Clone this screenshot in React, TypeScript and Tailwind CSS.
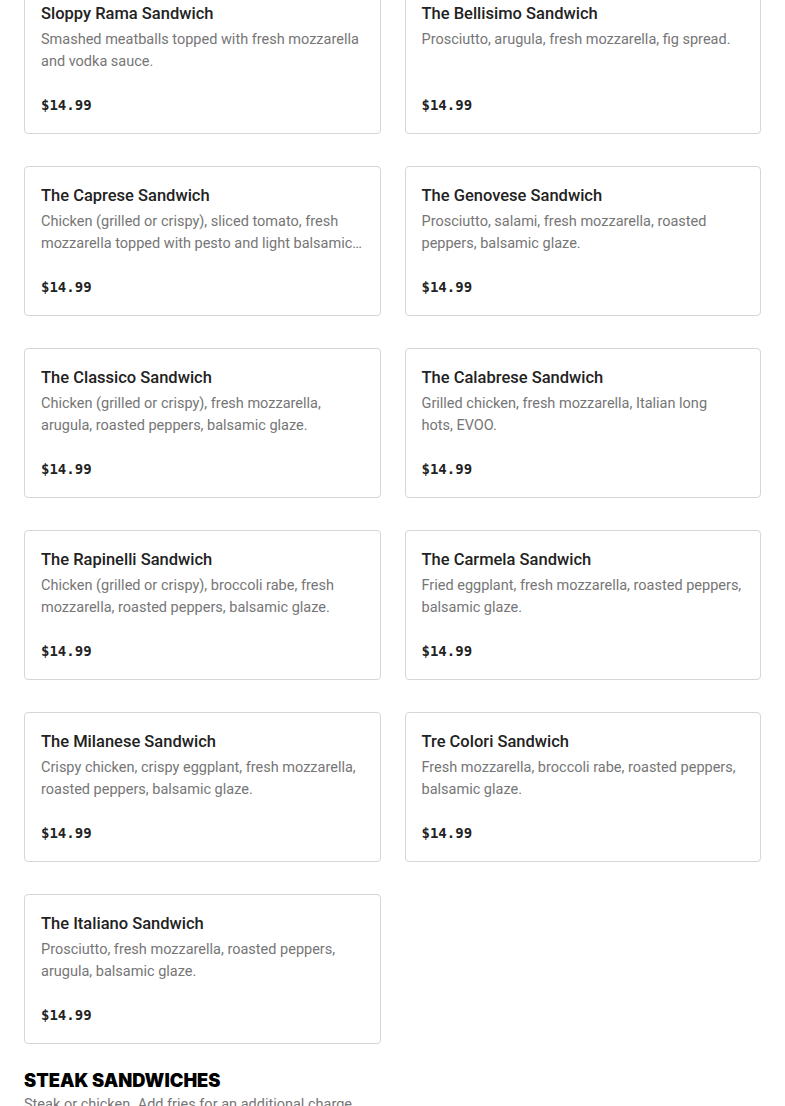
import React from "react";

const items: { name: string; desc: string }[] = [
  { name: "Sloppy Rama Sandwich", desc: "Smashed meatballs topped with fresh mozzarella and vodka sauce." },
  { name: "The Bellisimo Sandwich", desc: "Prosciutto, arugula, fresh mozzarella, fig spread." },
  { name: "The Caprese Sandwich", desc: "Chicken (grilled or crispy), sliced tomato, fresh mozzarella topped with pesto and light balsamic glaze." },
  { name: "The Genovese Sandwich", desc: "Prosciutto, salami, fresh mozzarella, roasted peppers, balsamic glaze." },
  { name: "The Classico Sandwich", desc: "Chicken (grilled or crispy), fresh mozzarella, arugula, roasted peppers, balsamic glaze." },
  { name: "The Calabrese Sandwich", desc: "Grilled chicken, fresh mozzarella, Italian long hots,\u00A0EVOO." },
  { name: "The Rapinelli Sandwich", desc: "Chicken (grilled or crispy), broccoli rabe, fresh mozzarella, roasted peppers, balsamic glaze." },
  { name: "The Carmela Sandwich", desc: "Fried eggplant, fresh mozzarella, roasted peppers, balsamic glaze." },
  { name: "The Milanese Sandwich", desc: "Crispy chicken, crispy eggplant, fresh mozzarella, roasted peppers, balsamic glaze." },
  { name: "Tre Colori Sandwich", desc: "Fresh mozzarella, broccoli rabe, roasted peppers, balsamic glaze." },
  { name: "The Italiano Sandwich", desc: "Prosciutto, fresh mozzarella, roasted peppers, arugula, balsamic glaze." },
];

export default function App() {
  return (
    <div className="bg-white w-[785px] h-[1106px] overflow-hidden" style={{ fontFamily: 'Roboto, "Liberation Sans", Arial, sans-serif' }}>
      <div className="px-6 -mt-4">
        <div className="grid grid-cols-2 gap-x-6 gap-y-8">
          {items.map((it) => (
            <div key={it.name} className="h-[150px] border border-[#d6d6d6] rounded-[4px] px-4 pt-[17px] pb-4 flex flex-col">
              <div className="text-[16.5px] leading-6 font-medium text-[#222]">{it.name}</div>
              <div className="mt-[3px] text-[14.5px] leading-[22px] text-[#767676] line-clamp-2">{it.desc}</div>
              <div className="mt-auto mb-[2px] text-[14px] leading-5 font-bold text-[#222]" style={{ fontFamily: '"DejaVu Sans Mono", "Liberation Mono", monospace' }}>$14.99</div>
            </div>
          ))}
        </div>
        <div className="mt-6">
          <h2 className="text-[18.3px] leading-6 font-black text-black" style={{ fontFamily: 'Inter, "Liberation Sans", sans-serif' }}>STEAK SANDWICHES</h2>
          <p className="mt-[2px] text-[14.5px] leading-[22px] text-[#767676]">Steak or chicken. Add fries for an additional charge.</p>
        </div>
      </div>
    </div>
  );
}
